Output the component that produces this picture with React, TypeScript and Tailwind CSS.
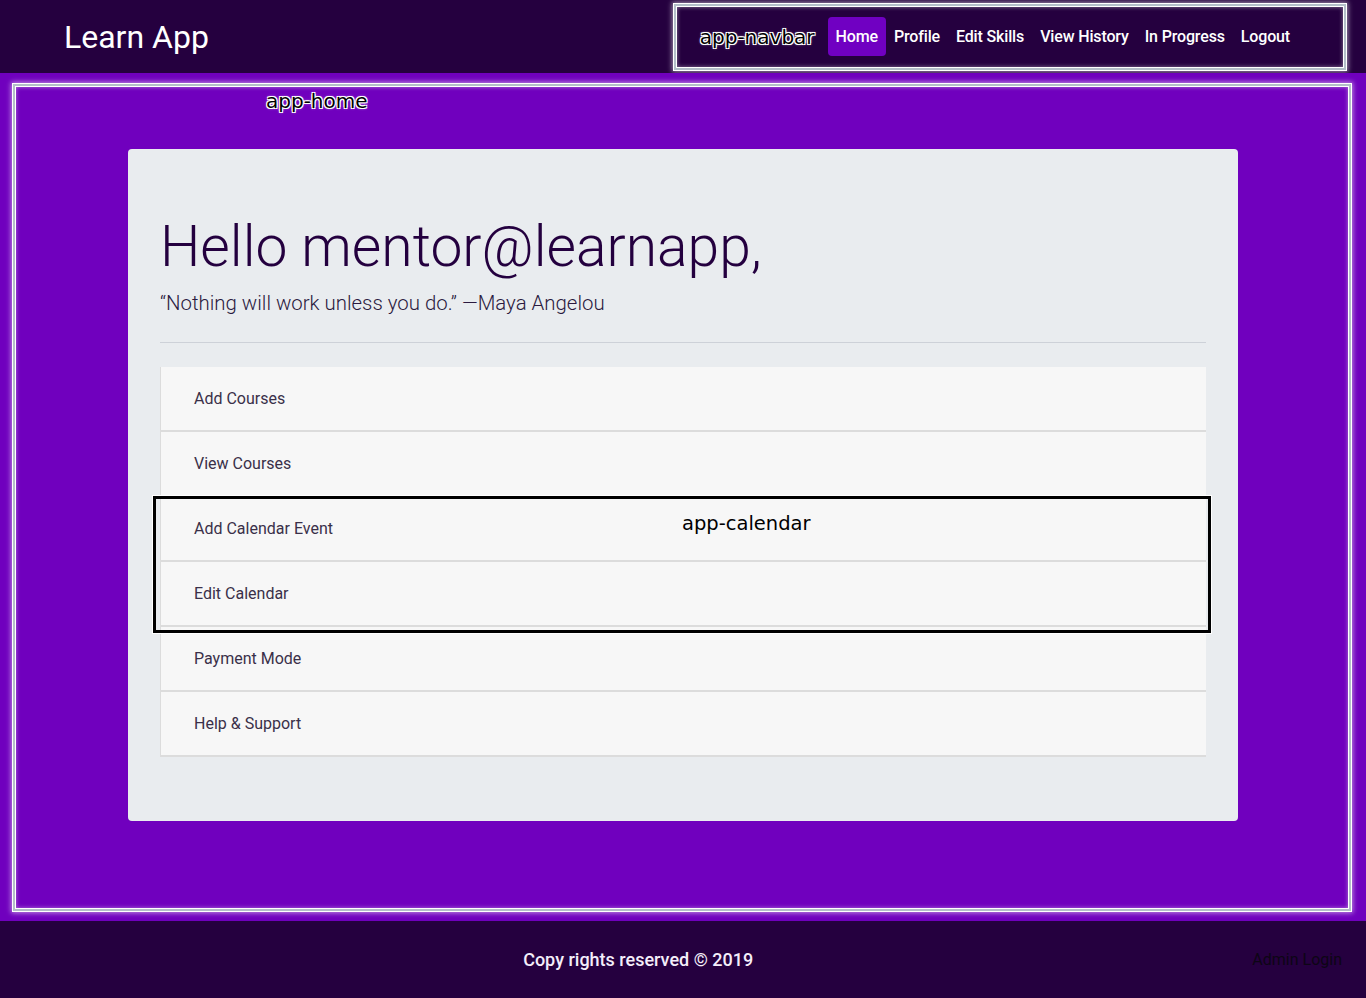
import React from "react";

const NAV_LINKS = ["Home", "Profile", "Edit Skills", "View History", "In Progress", "Logout"];

const MENU = [
  "Add Courses",
  "View Courses",
  "Add Calendar Event",
  "Edit Calendar",
  "Payment Mode",
  "Help & Support",
];

// highlight frame drawn around an angular component (devtools style)
const FRAME =
  "border-2 border-[#b3bec8] shadow-[0_0_0_1px_#ffffff,inset_0_0_0_1px_#ffffff,0_0_5px_2px_rgba(255,255,255,0.55),inset_0_0_4px_1px_rgba(255,255,255,0.45)]";

const TAG =
  "font-['DejaVu_Sans',sans-serif] text-[20px] leading-none text-black [text-shadow:1px_1px_0_#fff,-1px_-1px_0_#fff,1px_-1px_0_#fff,-1px_1px_0_#fff,0_0_3px_#fff]";

function MenuItem({ label }: { label: string }) {
  return (
    <div className="h-[65px] flex items-center pl-[33px] bg-[#f7f7f7] border-b-2 border-l border-[#dcdcdc] text-[16px] text-[#3a3049]">
      {label}
    </div>
  );
}

export default function App() {
  return (
    <div className="min-h-screen flex flex-col font-['Roboto',sans-serif]">
      {/* navbar */}
      <header className="h-[73px] bg-[#25003f] flex items-center justify-between pl-16 pr-5">
        <span className="text-white text-[32px] leading-none">Learn App</span>
        <nav className={`h-[66px] flex items-center pl-[24px] pr-[46px] ${FRAME}`}>
          <span className={`${TAG} mr-[13px]`}>app-navbar</span>
          {NAV_LINKS.map((l) => (
            <a
              key={l}
              className={`px-2 h-[39px] flex items-center rounded text-[16px] font-medium text-white tracking-[-0.15px] ${
                l === "Home" ? "bg-[#7000c2]" : ""
              }`}
            >
              {l}
            </a>
          ))}
        </nav>
      </header>

      {/* main */}
      <main className="bg-[#7000be] pt-[11px] pb-[10px] pl-[13px] pr-[15px]">
        <div className={`relative pt-[63px] pb-[88px] ${FRAME}`}>
          <span className={`${TAG} absolute left-[251px] top-[5px]`}>app-home</span>

          <div className="w-[1110px] ml-[113px] bg-[#e9ecef] rounded px-8 py-16 text-[#24003f]">
            <h1 className="text-[57px] font-light leading-[1.18] mb-2">Hello mentor@learnapp,</h1>
            <p className="text-[20.4px] font-light leading-[30px] text-[#2b1a40]">
              “Nothing will work unless you do.” —Maya Angelou
            </p>
            <hr className="mt-6 mb-6 border-t border-[#cdd1d8]" />

            <div className="flex flex-col">
              <MenuItem label={MENU[0]} />
              <MenuItem label={MENU[1]} />
              <div className="relative">
                <MenuItem label={MENU[2]} />
                <MenuItem label={MENU[3]} />
                <div className="absolute -left-[7px] -right-[5px] -top-[1px] -bottom-[6px] border-[3px] border-black shadow-[0_0_0_1px_#ffffff]" />
                <span className="absolute left-[522px] top-[17px] font-['DejaVu_Sans',sans-serif] text-[19.5px] leading-none text-black">
                  app-calendar
                </span>
              </div>
              <MenuItem label={MENU[4]} />
              <MenuItem label={MENU[5]} />
            </div>
          </div>
        </div>
      </main>

      {/* footer */}
      <footer className="flex-1 min-h-[77px] bg-[#25003f] flex items-center">
        <div className="flex-1 text-center pl-6 text-[18px] font-medium text-[#f4eefa]">
          Copy rights reserved © 2019
        </div>
        <a className="pr-6 text-[16px] text-[#0d0515]">Admin Login</a>
      </footer>
    </div>
  );
}
